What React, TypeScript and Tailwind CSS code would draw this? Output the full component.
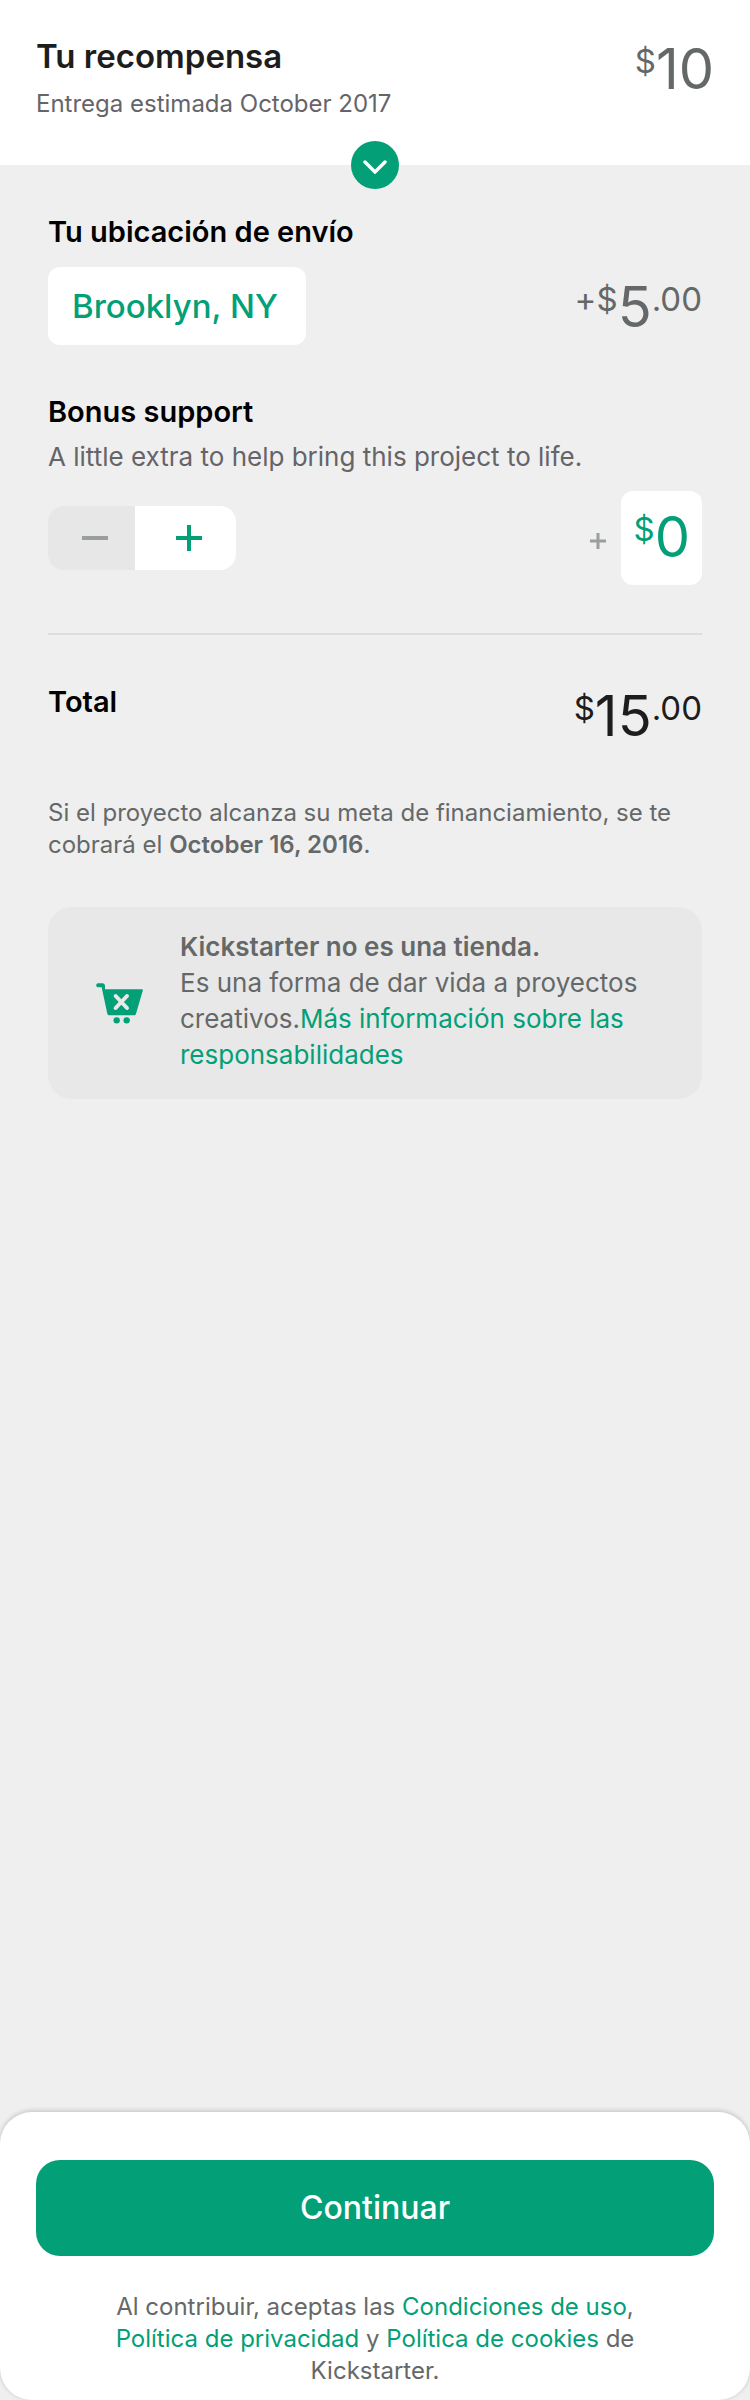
import { useState } from "react";

type PriceProps = {
  whole: string;
  cents?: string;
  plus?: boolean;
  className?: string;
};

function Price({ whole, cents, plus = false, className = "" }: PriceProps) {
  return (
    <p className={`flex shrink-0 items-start ${className}`}>
      {plus && <span className="text-[33px] leading-10">+</span>}
      <span className="text-[33px] leading-10">$</span>
      <span className="text-[56px] leading-14">{whole}</span>
      {cents && <span className="text-[33px] leading-10">.{cents}</span>}
    </p>
  );
}

function CartIcon() {
  return (
    <svg viewBox="0 0 141 123" className="mt-1 h-[41px] w-[47px] shrink-0" aria-hidden="true">
      <path
        d="M6 1h13c5 0 8 3 8 8v10h110c3 0 4 2 3 5l-20 68c-1 4-3 5-7 5H41c-4 0-6-1-7-5L17 13H6c-7 0-7-12 0-12z"
        fill="#039f77"
      />
      <path d="M59 39l34 36M93 39L59 75" stroke="#e8e8e8" strokeWidth="12" strokeLinecap="round" />
      <circle cx="62" cy="112" r="9.5" fill="#039f77" />
      <circle cx="92" cy="112" r="9.5" fill="#039f77" />
    </svg>
  );
}

export default function App() {
  const [bonus, setBonus] = useState(0);
  const total = 15 + bonus;

  return (
    <div className="flex min-h-screen flex-col bg-[#efefef] font-['Inter',sans-serif] text-[#656868]">
      <header className="relative flex justify-between bg-white px-9 pt-9 pb-[45px]">
        <div>
          <h1 className="text-[33px] leading-10 font-semibold text-[#1d1d1d]">Tu recompensa</h1>
          <p className="mt-3 text-2xl leading-8 text-[#656469]">Entrega estimada October 2017</p>
        </div>
        <Price whole="10" className="mt-[5px]" />
        <button
          type="button"
          aria-label="Mostrar recompensa"
          className="absolute -bottom-6 left-1/2 flex size-12 -translate-x-1/2 items-center justify-center rounded-full bg-[#039f77]"
        >
          <svg viewBox="0 0 24 14" className="mt-[3px] h-[14px] w-6" fill="none" aria-hidden="true">
            <path d="M2 2l10 10L22 2" stroke="#fff" strokeWidth="3.4" strokeLinecap="round" />
          </svg>
        </button>
      </header>

      <main className="px-12 pt-[49px]">
        <section>
          <h2 className="text-[29px] leading-9 font-semibold text-black">Tu ubicación de envío</h2>
          <div className="mt-[17px] flex items-start justify-between">
            <button
              type="button"
              className="rounded-xl bg-white py-[19px] pr-7 pl-6 text-[33px] leading-10 font-medium text-[#039f77]"
            >
              Brooklyn, NY
            </button>
            <Price plus whole="5" cents="00" className="mt-3" />
          </div>
        </section>

        <section className="mt-[49px]">
          <h2 className="text-[29px] leading-9 font-semibold text-black">Bonus support</h2>
          <p className="mt-[9px] text-[26px] leading-9 text-[#656469]">
            A little extra to help bring this project to life.
          </p>
          <div className="mt-4 flex items-center justify-between">
            <div className="flex h-16 overflow-hidden rounded-2xl">
              <button
                type="button"
                aria-label="Reducir"
                onClick={() => setBonus(Math.max(0, bonus - 1))}
                className="flex w-[87px] items-center justify-center bg-[#e7e7e7] pl-[6px]"
              >
                <span className="h-1 w-[26px] bg-[#9b9e9e]" />
              </button>
              <button
                type="button"
                aria-label="Aumentar"
                onClick={() => setBonus(bonus + 1)}
                className="flex w-[101px] items-center justify-center bg-white pl-[6px]"
              >
                <svg viewBox="0 0 26 26" className="size-[26px]" aria-hidden="true">
                  <path d="M13 0v26M0 13h26" stroke="#039f77" strokeWidth="4" />
                </svg>
              </button>
            </div>
            <div className="flex items-center gap-[15px]">
              <svg viewBox="0 0 16 16" className="mt-[6px] size-4" aria-hidden="true">
                <path d="M8 0v16M0 8h16" stroke="#9b9e9e" strokeWidth="3" />
              </svg>
              <label className="flex items-start rounded-xl bg-white px-3 pt-[18px] pb-5 text-[#039f77]">
                <span className="text-[33px] leading-10">$</span>
                <input
                  aria-label="Bonus support"
                  inputMode="numeric"
                  value={bonus}
                  onChange={(e) => setBonus(Number(e.target.value.replace(/\D/g, "")))}
                  className="field-sizing-content h-14 text-right text-[56px] leading-14 outline-none"
                />
              </label>
            </div>
          </div>
        </section>

        <hr className="mt-12 border-t-2 border-[#dcdedd]" />

        <section className="mt-[49px] flex items-start justify-between">
          <h2 className="text-[29px] leading-9 font-semibold text-black">Total</h2>
          <Price whole={String(total)} cents="00" className="mt-1 text-[#1d1d1d]" />
        </section>

        <p className="mt-[53px] text-2xl leading-8">
          Si el proyecto alcanza su meta de financiamiento, se te cobrará el{" "}
          <strong className="font-semibold">October 16, 2016</strong>.
        </p>

        <section className="mt-[46px] flex items-center rounded-3xl bg-[#e8e8e8] pt-[22px] pr-12 pb-[26px] pl-12">
          <CartIcon />
          <div className="ml-[37px] text-[26px] leading-9">
            <h3 className="font-semibold">Kickstarter no es una tienda.</h3>
            <p>
              Es una forma de dar vida a proyectos creativos.
              <a href="#responsabilidades" className="text-[#039f77]">
                Más información sobre las responsabilidades
              </a>
            </p>
          </div>
        </section>
      </main>

      <footer className="mt-auto rounded-[32px] bg-white px-9 pt-12 pb-[13px] shadow-[0_-1px_5px_rgba(0,0,0,0.2)]">
        <button
          type="button"
          className="h-24 w-full rounded-3xl bg-[#039f77] text-[32px] leading-10 font-medium text-white"
        >
          Continuar
        </button>
        <p className="mt-[35px] px-[72px] text-center text-2xl leading-8">
          Al contribuir, aceptas las{" "}
          <a href="#condiciones" className="text-[#039f77]">
            Condiciones de uso
          </a>
          ,{" "}
          <a href="#privacidad" className="text-[#039f77]">
            Política de privacidad
          </a>{" "}
          y{" "}
          <a href="#cookies" className="text-[#039f77]">
            Política de cookies
          </a>{" "}
          de Kickstarter.
        </p>
      </footer>
    </div>
  );
}
